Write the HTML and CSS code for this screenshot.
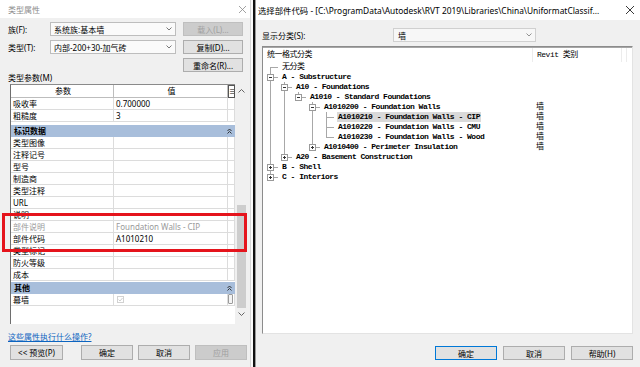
FILE: index.html
```html
<!DOCTYPE html>
<html lang="zh-CN">

<head>
    <meta charset="UTF-8">
    <meta name="viewport" content="width=device-width, initial-scale=1.0">
    <title>类型属性 - 选择部件代码</title>
    <link rel="stylesheet" href="styles.css">
</head>

<body>

    <div class="screen">

        <!-- 类型属性 -->
        <div class="dlg-left">
            <div class="titlebar dim">
                <span>类型属性</span>
                <svg class="close" width="7" height="7" viewBox="0 0 7 7"><path d="M0 0L7 7M7 0L0 7" stroke="#8a8a8a" stroke-width="0.8"/></svg>
            </div>

            <div class="field-row">
                <span class="field-label">族(F):</span>
                <div class="select">系统族:基本墙<svg class="chev" width="6" height="4" viewBox="0 0 6 4"><path d="M0.5 0.5L3 3L5.5 0.5" fill="none" stroke="#555" stroke-width="0.8"/></svg></div>
                <button class="btn side" disabled>载入(L)...</button>
            </div>
            <div class="field-row">
                <span class="field-label">类型(T):</span>
                <div class="select">内部-200+30-加气砖<svg class="chev" width="6" height="4" viewBox="0 0 6 4"><path d="M0.5 0.5L3 3L5.5 0.5" fill="none" stroke="#555" stroke-width="0.8"/></svg></div>
                <button class="btn side">复制(D)...</button>
            </div>
            <div class="field-row">
                <button class="btn side rename">重命名(R)...</button>
            </div>

            <div class="section-label">类型参数(M)</div>

            <div class="ptable-wrap">
                <div class="ptable">
                    <div class="prow phead">
                        <div class="pc">参数</div>
                        <div class="pc">值</div>
                        <div class="pc menu">≡</div>
                    </div>
                    <div class="prow"><div class="pc">吸收率</div><div class="pc val">0.700000</div><div class="pc"></div></div>
                    <div class="prow"><div class="pc">粗糙度</div><div class="pc val">3</div><div class="pc"></div></div>

                    <div class="group">标识数据<svg class="fold" width="5" height="6" viewBox="0 0 5 6"><path d="M0.5 3L2.5 1L4.5 3M0.5 5.5L2.5 3.5L4.5 5.5" fill="none" stroke="#222" stroke-width="0.9"/></svg></div>
                    <div class="prow"><div class="pc">类型图像</div><div class="pc val"></div><div class="pc"></div></div>
                    <div class="prow"><div class="pc">注释记号</div><div class="pc val"></div><div class="pc"></div></div>
                    <div class="prow"><div class="pc">型号</div><div class="pc val"></div><div class="pc"></div></div>
                    <div class="prow"><div class="pc">制造商</div><div class="pc val"></div><div class="pc"></div></div>
                    <div class="prow"><div class="pc">类型注释</div><div class="pc val"></div><div class="pc"></div></div>
                    <div class="prow"><div class="pc">URL</div><div class="pc val"></div><div class="pc"></div></div>
                    <div class="prow"><div class="pc">说明</div><div class="pc val"></div><div class="pc"></div></div>
                    <div class="prow grey"><div class="pc">部件说明</div><div class="pc val">Foundation Walls - CIP</div><div class="pc"></div></div>
                    <div class="prow"><div class="pc">部件代码</div><div class="pc val">A1010210</div><div class="pc"></div></div>
                    <div class="prow"><div class="pc">类型标记</div><div class="pc val"></div><div class="pc"></div></div>
                    <div class="prow"><div class="pc">防火等级</div><div class="pc val"></div><div class="pc"></div></div>
                    <div class="prow"><div class="pc">成本</div><div class="pc val"></div><div class="pc"></div></div>

                    <div class="group other">其他<svg class="fold" width="5" height="6" viewBox="0 0 5 6"><path d="M0.5 3L2.5 1L4.5 3M0.5 5.5L2.5 3.5L4.5 5.5" fill="none" stroke="#222" stroke-width="0.9"/></svg></div>
                    <div class="prow">
                        <div class="pc">幕墙</div>
                        <div class="pc val"><svg class="check" width="7" height="7" viewBox="0 0 7 7"><rect x="0.5" y="0.5" width="6" height="6" fill="#fff" stroke="#d2d2d2"/><path d="M1.5 3.5L3 5L5.5 2" fill="none" stroke="#c8c8c8" stroke-width="0.9"/></svg></div>
                        <div class="pc"><span class="mini-thumb"></span></div>
                    </div>
                </div>

                <div class="vscroll">
                    <svg class="arrow" width="7" height="4" viewBox="0 0 7 4"><path d="M0.5 3.5L3.5 0.5L6.5 3.5" fill="none" stroke="#555" stroke-width="0.9"/></svg>
                    <div class="thumb"></div>
                    <svg class="arrow down" width="7" height="4" viewBox="0 0 7 4"><path d="M0.5 0.5L3.5 3.5L6.5 0.5" fill="none" stroke="#555" stroke-width="0.9"/></svg>
                </div>
            </div>

            <a class="help-link" href="#">这些属性执行什么操作?</a>

            <div class="btn-row">
                <button class="btn preview">&lt;&lt; 预览(P)</button>
                <button class="btn">确定</button>
                <button class="btn">取消</button>
                <button class="btn" disabled>应用</button>
            </div>
        </div>

        <div class="gap"></div>
        <div class="divider"></div>

        <!-- 选择部件代码 -->
        <div class="dlg-right">
            <div class="titlebar">
                <span>选择部件代码 - [C:\ProgramData\Autodesk\RVT 2019\Libraries\China\UniformatClassif...</span>
                <svg class="close" width="8" height="8" viewBox="0 0 8 8"><path d="M0 0L8 8M8 0L0 8" stroke="#222" stroke-width="0.9"/></svg>
            </div>

            <div class="filter-row">
                <span class="filter-label">显示分类(S):</span>
                <div class="select wide">墙<svg class="chev" width="6" height="4" viewBox="0 0 6 4"><path d="M0.5 0.5L3 3L5.5 0.5" fill="none" stroke="#777" stroke-width="0.8"/></svg></div>
            </div>

            <div class="tree-panel">
                <div class="tree-head">
                    <div class="th name">统一格式分类</div>
                    <div class="th cat">Revit 类别</div>
                    <div class="th rest"></div>
                </div>

                <div class="tree">
                    <div class="trow"><div class="tname"><span class="g first"></span><span class="tt plain">无分类</span></div><div class="tcat"></div></div>
                    <div class="trow"><div class="tname"><span class="g mid"><span class="bx minus"></span></span><span class="tt">A - Substructure</span></div><div class="tcat"></div></div>
                    <div class="trow"><div class="tname"><span class="g v"></span><span class="g mid"><span class="bx minus"></span></span><span class="tt">A10 - Foundations</span></div><div class="tcat"></div></div>
                    <div class="trow"><div class="tname"><span class="g v"></span><span class="g v"></span><span class="g last"><span class="bx minus"></span></span><span class="tt">A1010 - Standard Foundations</span></div><div class="tcat"></div></div>
                    <div class="trow"><div class="tname"><span class="g v"></span><span class="g v"></span><span class="g"></span><span class="g mid"><span class="bx minus"></span></span><span class="tt">A1010200 - Foundation Walls</span></div><div class="tcat">墙</div></div>
                    <div class="trow"><div class="tname"><span class="g v"></span><span class="g v"></span><span class="g"></span><span class="g v"></span><span class="g mid"></span><span class="tt selected">A1010210 - Foundation Walls - CIP</span></div><div class="tcat">墙</div></div>
                    <div class="trow"><div class="tname"><span class="g v"></span><span class="g v"></span><span class="g"></span><span class="g v"></span><span class="g mid"></span><span class="tt">A1010220 - Foundation Walls - CMU</span></div><div class="tcat">墙</div></div>
                    <div class="trow"><div class="tname"><span class="g v"></span><span class="g v"></span><span class="g"></span><span class="g v"></span><span class="g last"></span><span class="tt">A1010230 - Foundation Walls - Wood</span></div><div class="tcat">墙</div></div>
                    <div class="trow"><div class="tname"><span class="g v"></span><span class="g v"></span><span class="g"></span><span class="g last"><span class="bx plus"></span></span><span class="tt">A1010400 - Perimeter Insulation</span></div><div class="tcat">墙</div></div>
                    <div class="trow"><div class="tname"><span class="g v"></span><span class="g last"><span class="bx plus"></span></span><span class="tt">A20 - Basement Construction</span></div><div class="tcat"></div></div>
                    <div class="trow"><div class="tname"><span class="g mid"><span class="bx plus"></span></span><span class="tt">B - Shell</span></div><div class="tcat"></div></div>
                    <div class="trow"><div class="tname"><span class="g last"><span class="bx plus"></span></span><span class="tt">C - Interiors</span></div><div class="tcat"></div></div>
                </div>
            </div>

            <div class="btn-row right">
                <button class="btn wide default">确定</button>
                <button class="btn wide">取消</button>
                <button class="btn wide">帮助(H)</button>
            </div>
        </div>

        <!-- annotation over the table -->
        <div class="mark"></div>
    </div>

</body>

</html>
```

FILE: styles.css
```css
* {
    margin: 0;
    padding: 0;
    box-sizing: border-box;
}

body {
    font-family: "Noto Sans", "Noto Sans CJK SC", sans-serif;
    font-size: 8px;
    color: #000;
    background-color: #fff;
}

.screen {
    position: relative;
    width: 640px;
    height: 367px;
    display: flex;
    overflow: hidden;
}

/* ---------- shared ---------- */

.titlebar {
    height: 18px;
    display: flex;
    align-items: center;
    justify-content: space-between;
    background-color: #fff;
    white-space: nowrap;
}

.titlebar.dim {
    color: #8c8c8c;
    padding: 0 4px 0 8px;
}

.select {
    position: relative;
    height: 14px;
    display: flex;
    align-items: center;
    padding-left: 3px;
    background-color: #fafafa;
    border: 1px solid #bdbdbd;
}

.chev {
    position: absolute;
    right: 3px;
    top: 4px;
}

.btn {
    font-family: inherit;
    font-size: 8px;
    height: 15px;
    background-color: #e1e1e1;
    border: 1px solid #adadad;
    color: #000;
}

.btn:disabled {
    background-color: #cccccc;
    border-color: #bfbfbf;
    color: #a0a0a0;
}

/* ---------- left dialog ---------- */

.dlg-left {
    width: 251px;
    flex-shrink: 0;
    display: flex;
    flex-direction: column;
    background-color: #f0f0f0;
    border-right: 1px solid #d6d6d6;
}

.field-row {
    display: flex;
    align-items: center;
    height: 14px;
    margin-top: 4px;
}

.field-label {
    width: 50px;
    padding-left: 8px;
}

.field-row .select {
    width: 126px;
    margin-right: 7px;
}

.btn.side {
    width: 60px;
    height: 14px;
}

.btn.rename {
    margin-left: 183px;
}

.section-label {
    height: 12px;
    line-height: 12px;
    padding-left: 8px;
}

.ptable-wrap {
    display: flex;
    height: 240px;
    margin-left: 10px;
}

.ptable {
    width: 225px;
    background-color: #fff;
    border-left: 1px solid #6e6e6e;
    border-top: 1px solid #8a8a8a;
}

.prow {
    display: grid;
    grid-template-columns: 103px 114px 7px;
    height: 12px;
}

.pc {
    border-right: 1px solid #dcdcdc;
    border-bottom: 1px solid #dcdcdc;
    padding-left: 2px;
    line-height: 11px;
    white-space: nowrap;
    overflow: hidden;
}

.prow .val {
    padding-left: 2px;
}

.phead {
    height: 13px;
}

.phead .pc {
    text-align: center;
    line-height: 12px;
    border-color: #bdbdbd;
}

.phead .menu {
    padding: 0;
    font-size: 7px;
    border: 1px solid #555;
}

.prow.grey .pc {
    color: #9a9a9a;
}

.group {
    position: relative;
    height: 12px;
    line-height: 12px;
    margin-top: 3px;
    padding-left: 3px;
    font-weight: 600;
    background-color: #a8bedb;
}

.group.other {
    margin-top: 1px;
}

.fold {
    position: absolute;
    right: 3px;
    top: 3px;
}

.check {
    display: block;
    margin: 2px 0 0 1px;
}

.mini-thumb {
    display: block;
    width: 5px;
    height: 10px;
    margin-left: -2px;
    border: 1px solid #9c9c9c;
    border-radius: 1px;
    background-color: #f4f4f4;
}

.vscroll {
    width: 12px;
    display: flex;
    flex-direction: column;
    align-items: center;
    background-color: #f0f0f0;
}

.vscroll .arrow {
    margin-top: 5px;
}

.thumb {
    width: 9px;
    height: 103px;
    margin-top: 112px;
    background-color: #cdcdcd;
}

.vscroll .arrow.down {
    margin-top: 4px;
}

.help-link {
    margin-top: 7px;
    margin-left: 8px;
    height: 11px;
    color: #0c64c0;
    text-decoration: underline;
}

.btn-row {
    display: flex;
    gap: 5px;
    margin-top: 3px;
    padding-left: 10px;
}

.btn-row .btn {
    width: 52px;
}

.btn-row .preview {
    width: 53px;
    margin-right: 13px;
}

.gap {
    width: 2px;
    flex-shrink: 0;
    background-color: #fafafa;
}

.divider {
    width: 2px;
    flex-shrink: 0;
    background-color: #111;
}

/* ---------- right dialog ---------- */

.dlg-right {
    flex: 1;
    min-width: 0;
    display: flex;
    flex-direction: column;
    background-color: #f0f0f0;
    border-left: 1px solid #9a9a9a;
}

.dlg-right .titlebar {
    height: 20px;
    padding: 0 6px 0 2px;
    font-size: 8.4px;
}

.filter-row {
    display: flex;
    align-items: center;
    height: 14px;
    margin-top: 8px;
    padding-left: 6px;
}

.filter-label {
    width: 131px;
}

.select.wide {
    width: 143px;
    padding-left: 4px;
    background-color: #f7f7f7;
    border-color: #d0d0d0;
}

.tree-panel {
    width: 371px;
    height: 288px;
    margin: 4px 0 0 6px;
    background-color: #fff;
    border: 1px solid #8c8c8c;
    border-right-color: #e3e3e3;
    border-bottom-color: #e3e3e3;
    font-family: "Liberation Mono", "Noto Sans CJK SC", monospace;
    letter-spacing: -0.5px;
}

.tree-head {
    display: flex;
    height: 15px;
    border-top: 1px solid #a6a6a6;
}

.th {
    line-height: 14px;
    padding-left: 4px;
    border-right: 1px solid #ececec;
}

.th.name {
    width: 270px;
}

.th.cat {
    width: 89px;
}

.trow {
    display: flex;
    height: 10px;
    line-height: 10px;
}

.tname {
    width: 270px;
    display: flex;
    white-space: nowrap;
}

.tt {
    margin-left: 4px;
    padding: 0 1px;
    font-weight: bold;
}

.tt.plain {
    font-weight: normal;
}

.tt.selected {
    background-color: #d9d9d9;
}

.tcat {
    padding-left: 3px;
}

/* tree guide lines */
.g {
    position: relative;
    width: 14px;
    height: 10px;
    flex-shrink: 0;
}

.g::before,
.g::after {
    content: "";
    position: absolute;
    background-color: #a8a8a8;
}

.g.v::before,
.g.mid::before {
    left: 7px;
    top: 0;
    width: 1px;
    height: 10px;
}

.g.last::before {
    left: 7px;
    top: 0;
    width: 1px;
    height: 6px;
}

.g.first::before {
    left: 7px;
    top: 5px;
    width: 1px;
    height: 5px;
}

.g.mid::after,
.g.last::after,
.g.first::after {
    left: 8px;
    top: 5px;
    width: 7px;
    height: 1px;
}

.bx {
    position: absolute;
    left: 4px;
    top: 2px;
    width: 7px;
    height: 7px;
    z-index: 1;
    background-color: #fff;
    border: 1px solid #9a9a9a;
}

.bx::before,
.bx::after {
    content: "";
    position: absolute;
    background-color: #333;
}

.bx::before {
    left: 1px;
    top: 2px;
    width: 3px;
    height: 1px;
}

.bx.plus::after {
    left: 2px;
    top: 1px;
    width: 1px;
    height: 3px;
}

.btn-row.right {
    justify-content: flex-end;
    gap: 6px;
    margin-top: 12px;
    padding-right: 7px;
}

.btn-row .btn.wide {
    width: 62px;
    height: 14px;
}

.btn.default {
    border-color: #0078d7;
}

/* red highlight frame drawn over the table */
.mark {
    position: absolute;
    left: 2px;
    top: 213px;
    width: 245px;
    height: 39px;
    border: 3px solid #e5141c;
}
```
